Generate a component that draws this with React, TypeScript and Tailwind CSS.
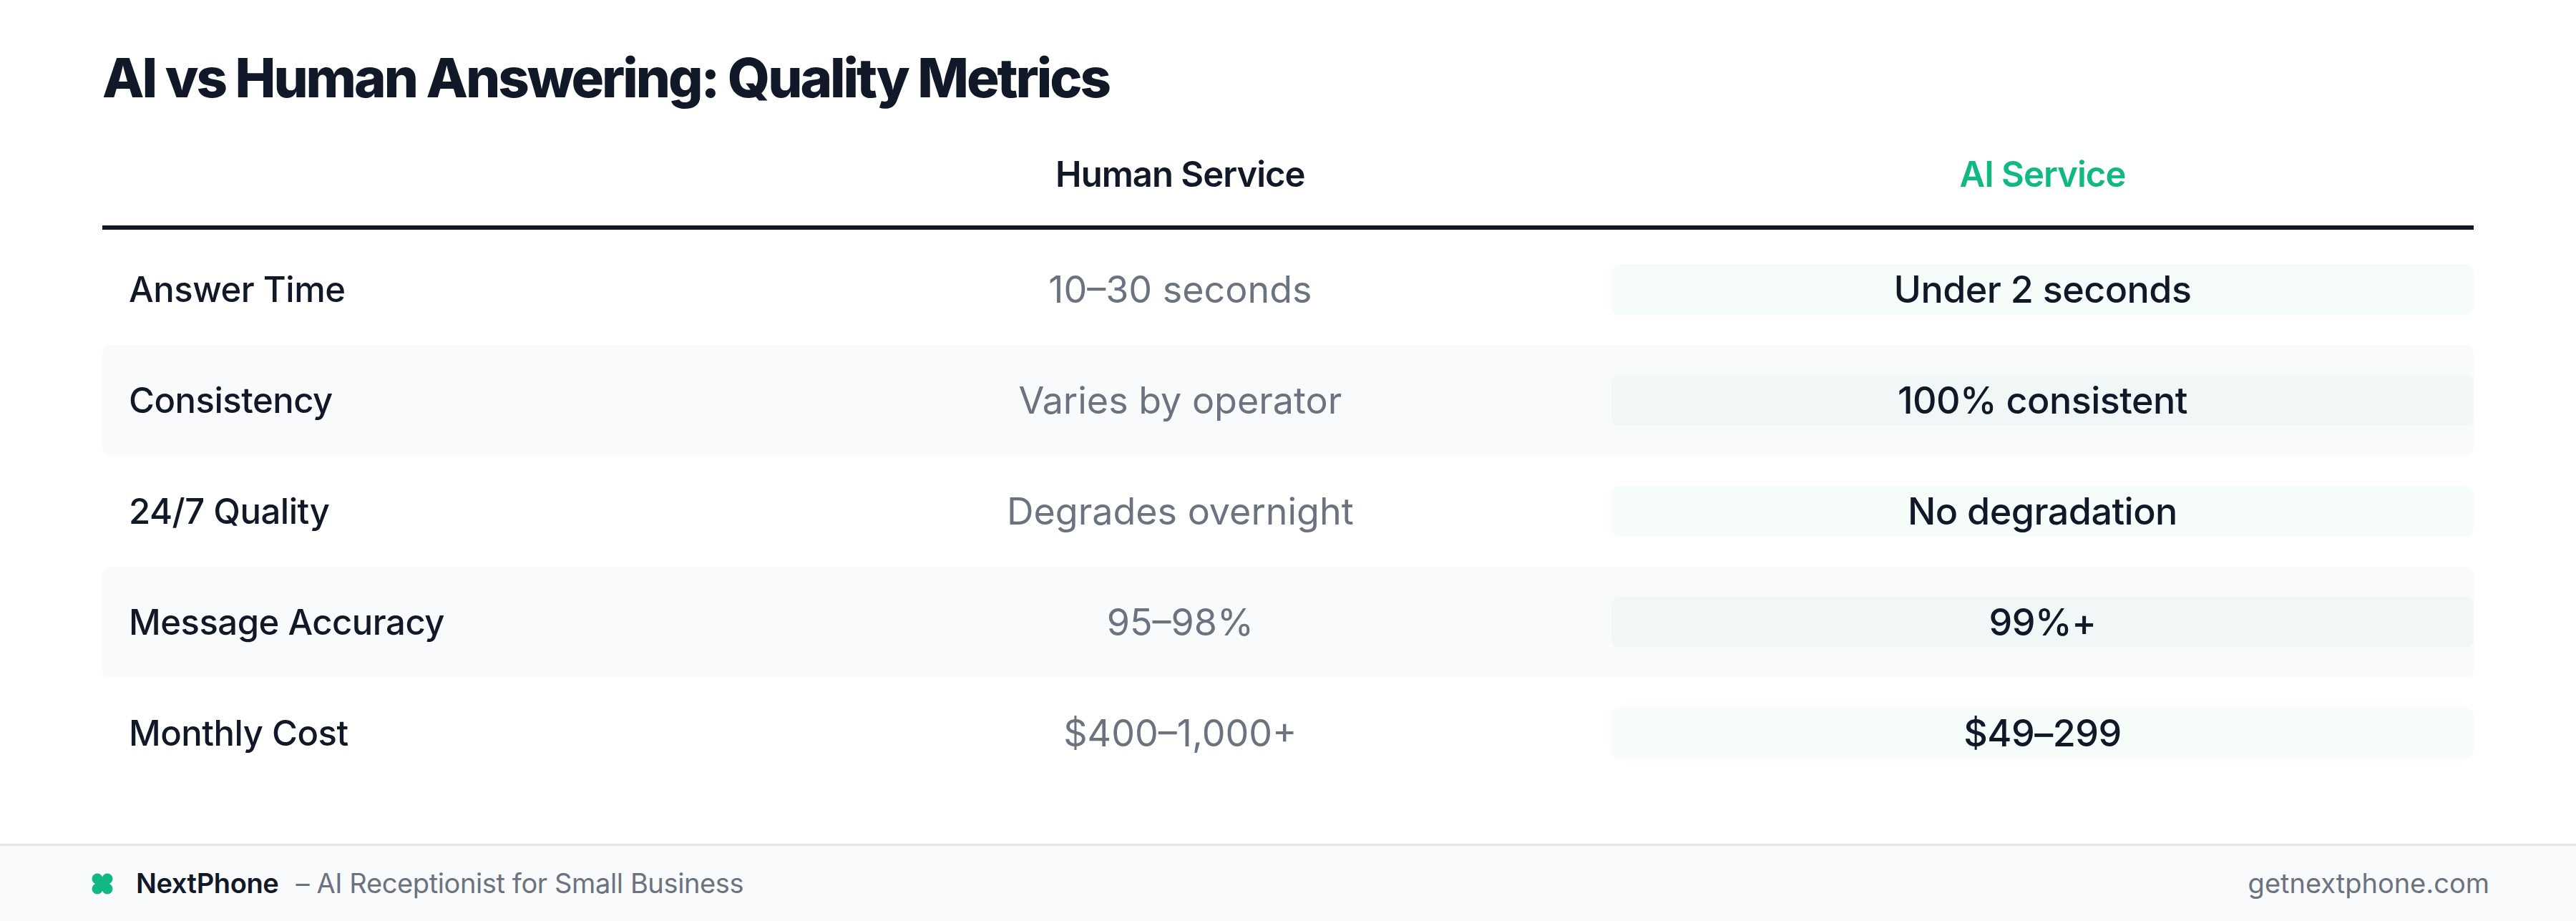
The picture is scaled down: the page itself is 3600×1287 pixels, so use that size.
import React from "react";

const rows = [
  { label: "Answer Time", human: "10–30 seconds", ai: "Under 2 seconds" },
  { label: "Consistency", human: "Varies by operator", ai: "100% consistent" },
  { label: "24/7 Quality", human: "Degrades overnight", ai: "No degradation" },
  { label: "Message Accuracy", human: "95–98%", ai: "99%+" },
  { label: "Monthly Cost", human: "$400–1,000+", ai: "$49–299" },
];

function Logo() {
  return (
    <svg width="30" height="30" viewBox="0 0 30 30" fill="#10b981">
      <circle cx="8" cy="8" r="7.5" />
      <circle cx="22" cy="8" r="7.5" />
      <circle cx="8" cy="22" r="7.5" />
      <circle cx="22" cy="22" r="7.5" />
      <rect x="8" y="8" width="14" height="14" />
    </svg>
  );
}

export default function App() {
  return (
    <div
      className="flex h-[1287px] w-[3600px] flex-col bg-white text-[#111827]"
      style={{ fontFamily: "Inter, 'Liberation Sans', sans-serif" }}
    >
      <main className="flex-1 px-[143px] pt-[62px]">
        <h1 className="text-[76px] leading-[92px] font-extrabold tracking-[-0.04em]">
          AI vs Human Answering: Quality Metrics
        </h1>

        <div className="mt-[60px] grid grid-cols-[1.5fr_2fr_2fr] border-b-[6px] border-[#111827] pb-[41px] text-[49px] leading-[60px] font-semibold tracking-[-0.02em]">
          <div />
          <div className="text-center">Human Service</div>
          <div className="text-center text-[#10b981]">AI Service</div>
        </div>

        <div className="mt-[6px]">
          {rows.map((r, i) => (
            <div
              key={r.label}
              className={`grid h-[155px] grid-cols-[1.5fr_2fr_2fr] items-center rounded-[12px] leading-[60px] ${
                i % 2 === 1 ? "bg-[#f9fafb]" : ""
              }`}
            >
              <div className="pl-[37px] text-[49px] font-medium tracking-[-0.01em]">{r.label}</div>
              <div className="text-center text-[52px] text-[#6b7280]">{r.human}</div>
              <div className="flex h-[71px] items-center justify-center rounded-[12px] bg-[#10b9810a] text-[52px] font-medium tracking-[-0.01em]">
                {r.ai}
              </div>
            </div>
          ))}
        </div>
      </main>

      <footer className="flex h-[108px] items-center justify-between border-t-[3px] border-[#e5e7eb] bg-[#f9fafb] pr-[121px] pl-[128px] text-[38px]">
        <div className="flex items-center">
          <Logo />
          <span className="ml-[32px] font-semibold tracking-[-0.01em] text-[#111827]">NextPhone</span>
          <span className="ml-[24px] tracking-[-0.01em] text-[#6b7280]">– AI Receptionist for Small Business</span>
        </div>
        <span className="text-[#6b7280]">getnextphone.com</span>
      </footer>
    </div>
  );
}
